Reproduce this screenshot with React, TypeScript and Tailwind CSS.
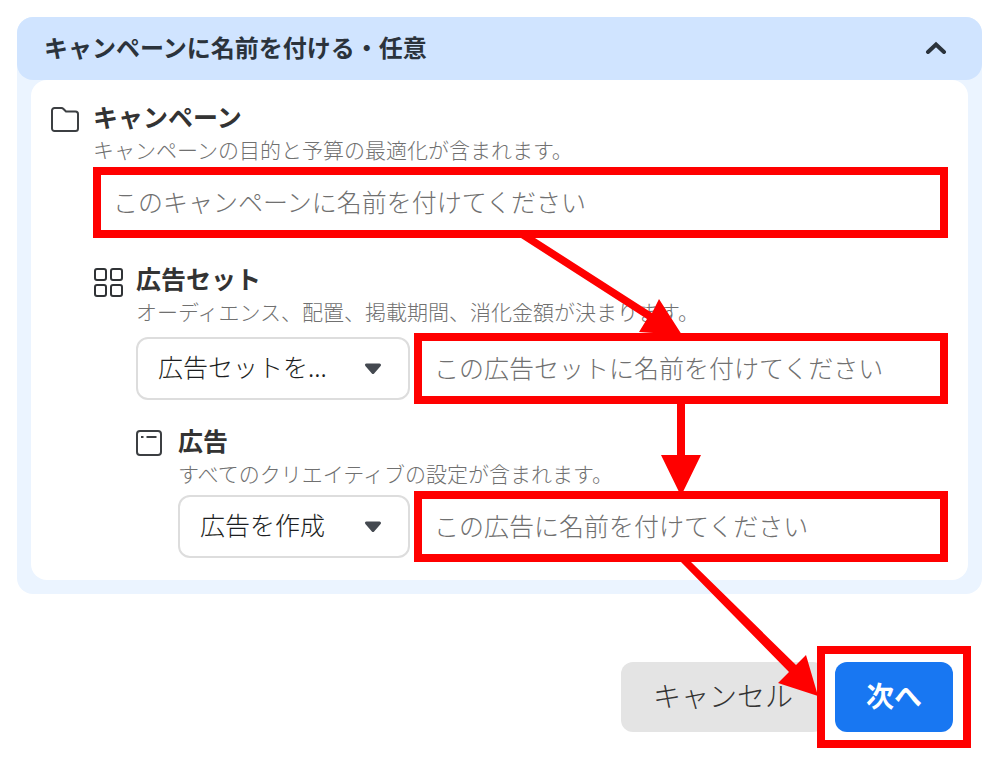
import type { ReactNode } from "react";

function FolderIcon() {
  return (
    <svg width="28" height="25" viewBox="0 0 28 25" fill="none" stroke="#3c3f42" strokeWidth="2" strokeLinejoin="round">
      <path d="M1 3.5V21.5A2.5 2.5 0 0 0 3.5 24H24.5A2.5 2.5 0 0 0 27 21.5V7A2.5 2.5 0 0 0 24.5 4.5H15L12.5 2Q11.5 1 10.5 1H3.5A2.5 2.5 0 0 0 1 3.5Z" />
    </svg>
  );
}

function GridIcon() {
  return (
    <svg width="29" height="29" viewBox="0 0 29 29" fill="none" stroke="#303336" strokeWidth="2">
      <rect x="1" y="1" width="11" height="11" rx="2" />
      <rect x="17" y="1" width="11" height="11" rx="2" />
      <rect x="1" y="17" width="11" height="11" rx="2" />
      <rect x="17" y="17" width="11" height="11" rx="2" />
    </svg>
  );
}

function WindowIcon() {
  return (
    <svg width="26" height="26" viewBox="0 0 26 26" fill="none" stroke="#3c3f42" strokeWidth="2">
      <rect x="1" y="1" width="24" height="24" rx="3" />
      <path d="M5 7H7.5M10.5 7H20.5" />
    </svg>
  );
}

function Heading({ id, title, note }: { id: string; title: string; note: string }) {
  return (
    <div className="mb-0.5 whitespace-nowrap">
      <label htmlFor={id} className="block text-[25px] leading-[34px] font-bold text-[#333333]">
        {title}
      </label>
      <p className="text-[21px] leading-8 font-light text-[#707070]">{note}</p>
    </div>
  );
}

function NameField({ id, placeholder, children }: { id: string; placeholder: string; children?: ReactNode }) {
  return (
    <div className="relative min-w-0 flex-1">
      <input
        id={id}
        type="text"
        placeholder={placeholder}
        className="block h-[71px] w-full border-8 border-[#ff0000] bg-white px-3 pb-1 text-[25px] font-light text-[#333333] outline-none placeholder:text-[#707070]"
      />
      {children}
    </div>
  );
}

function Picker({ label, option, className }: { label: string; option: string; className: string }) {
  return (
    <div className={`relative shrink-0 ${className}`}>
      <select
        aria-label={label}
        className="block h-[63px] w-full appearance-none rounded-xl border-2 border-[#dddddd] bg-white pb-1 pl-5 text-[25px] font-light text-[#1c1e21]"
      >
        <option>{option}</option>
      </select>
      <svg className="pointer-events-none absolute top-[26px] right-7" width="18" height="12" viewBox="0 0 18 12">
        <path d="M2.5 2H15.5L9 9.5Z" fill="#444950" stroke="#444950" strokeWidth="3" strokeLinejoin="round" />
      </svg>
    </div>
  );
}

export default function App() {
  return (
    <main className="px-5 pt-[17px] pb-3.5 pl-[17px] font-['Noto_Sans_CJK_JP',sans-serif]">
      <section className="rounded-2xl bg-[#ebf4ff] px-3.5 pb-3.5">
        <button
          type="button"
          className="-mx-3.5 flex h-[63px] w-[calc(100%+28px)] items-center justify-between rounded-2xl bg-[#d0e4ff] pr-[35px] pb-1 pl-[27px] text-2xl font-bold text-[#2b333c]"
        >
          キャンペーンに名前を付ける・任意
          <svg width="22" height="14" viewBox="0 0 22 14" fill="none" stroke="#2b333c" strokeWidth="4" strokeLinecap="round">
            <path d="M3 12L11 4.5L19 12" />
          </svg>
        </button>

        <div className="rounded-2xl bg-white px-5 pt-[19px] pb-[18px]">
          <div className="flex gap-3.5">
            <div className="w-7 shrink-0 pt-2">
              <FolderIcon />
            </div>
            <div className="min-w-0 flex-1">
              <Heading id="campaign" title="キャンペーン" note="キャンペーンの目的と予算の最適化が含まれます。" />
              <div className="flex">
                <NameField id="campaign" placeholder="このキャンペーンに名前を付けてください">
                  <svg
                    className="pointer-events-none absolute top-full left-1/2 z-10"
                    width="164"
                    height="98"
                    viewBox="0 0 164 98"
                    fill="#ff0000"
                  >
                    <path d="M0 0H14L131 75L138 61L161 97L118 94L126 81Z" />
                  </svg>
                </NameField>
              </div>
            </div>
          </div>

          <div className="mt-[23px] flex gap-3.5 pl-[43px]">
            <div className="w-7 shrink-0 pt-[7px]">
              <GridIcon />
            </div>
            <div className="min-w-0 flex-1">
              <Heading id="adset" title="広告セット" note="オーディエンス、配置、掲載期間、消化金額が決まります。" />
              <div className="mt-1.5 flex items-center gap-1">
                <Picker label="広告セットの作成方法" option="広告セットを..." className="w-[274px]" />
                <NameField id="adset" placeholder="この広告セットに名前を付けてください">
                  <svg
                    className="pointer-events-none absolute top-full left-1/2 z-10 -translate-x-1/2"
                    width="40"
                    height="92"
                    viewBox="0 0 40 92"
                    fill="#ff0000"
                  >
                    <path d="M16 0H24V51H40L20 92L0 51H16Z" />
                  </svg>
                </NameField>
              </div>
            </div>
          </div>

          <div className="mt-[19px] flex gap-3.5 pl-[85px]">
            <div className="w-7 shrink-0 pt-[7px]">
              <WindowIcon />
            </div>
            <div className="min-w-0 flex-1">
              <Heading id="ad" title="広告" note="すべてのクリエイティブの設定が含まれます。" />
              <div className="flex items-center gap-1">
                <Picker label="広告の作成方法" option="広告を作成" className="w-[232px]" />
                <NameField id="ad" placeholder="この広告に名前を付けてください">
                  <svg
                    className="pointer-events-none absolute top-full left-1/2 z-10"
                    width="138"
                    height="136"
                    viewBox="0 0 138 136"
                    fill="#ff0000"
                  >
                    <path d="M0 0H10L115 103L125 93L137 134L97 121L108 110Z" />
                  </svg>
                </NameField>
              </div>
            </div>
          </div>
        </div>
      </section>

      <div className="mt-[52px] flex items-center justify-end pr-[11px]">
        <button type="button" className="h-[70px] rounded-xl bg-[#e4e4e4] px-8 pb-1 text-[28px] font-light text-[#333333]">
          キャンセル
        </button>
        <div className="z-10 -ml-2 border-8 border-[#ff0000] bg-white px-2.5 py-2">
          <button
            type="button"
            className="block h-[70px] w-[118px] rounded-xl bg-[#1877f2] pb-1 text-[28px] font-bold text-white"
          >
            次へ
          </button>
        </div>
      </div>
    </main>
  );
}
